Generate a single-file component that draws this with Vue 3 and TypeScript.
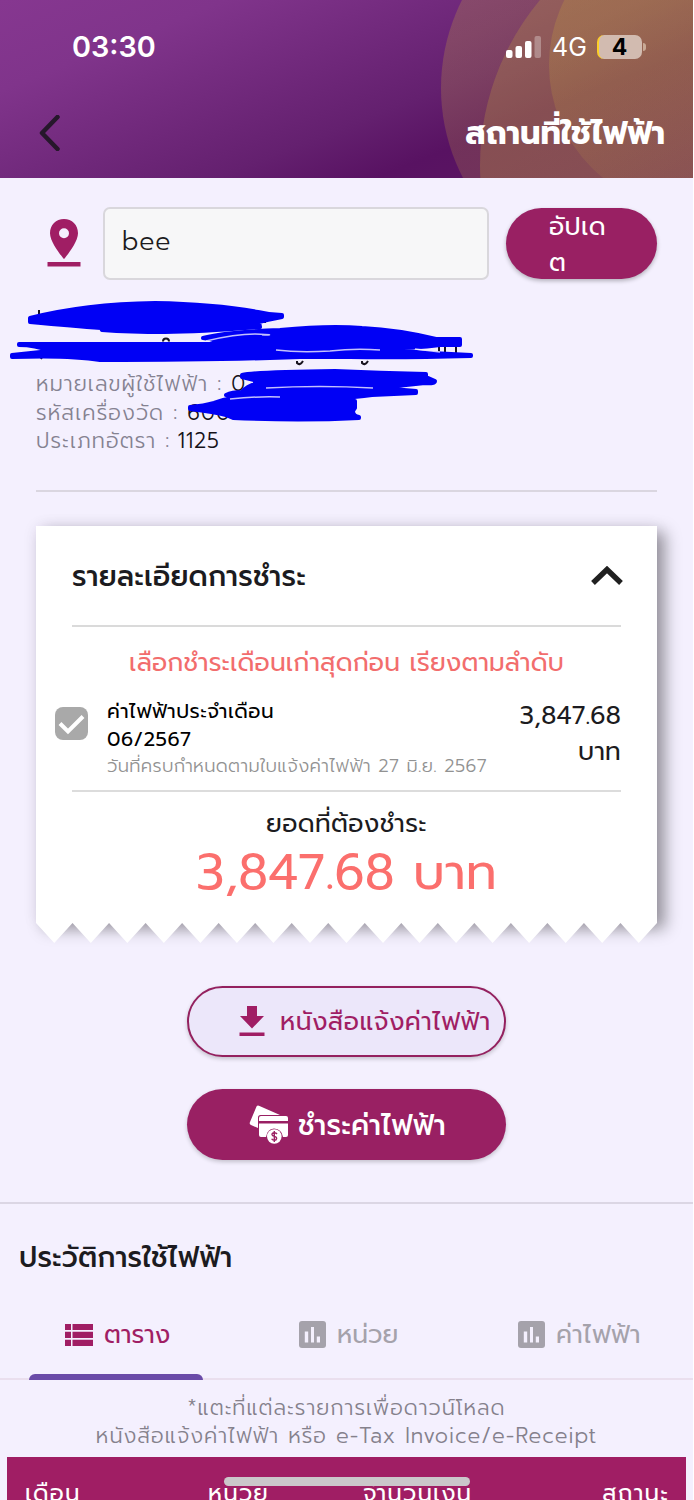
<script setup lang="ts">
interface Tab {
  id: string
  label: string
  icon: 'list' | 'chart'
}

const tabs: Tab[] = [
  { id: 'table', label: 'ตาราง', icon: 'list' },
  { id: 'unit', label: 'หน่วย', icon: 'chart' },
  { id: 'cost', label: 'ค่าไฟฟ้า', icon: 'chart' },
]
const columns: string[] = ['เดือน', 'หน่วย', 'จำนวนเงิน', 'สถานะ']
const teeth = 17
const pitch = 621 / teeth
const tearPath =
  'M0 0' +
  Array.from({ length: teeth }, (_, i) => ` L${((i + 0.5) * pitch).toFixed(2)} 20 L${((i + 1) * pitch).toFixed(2)} 0`).join('') +
  ' Z'
</script>

<template>
  <div class="page">
    <header class="hero">
      <svg class="hero-art" width="693" height="178" viewBox="0 0 693 178">
        <defs>
          <linearGradient id="ring" gradientUnits="userSpaceOnUse" x1="540" y1="0" x2="640" y2="200">
            <stop offset="0" stop-color="#c09a40" stop-opacity=".28" />
            <stop offset="1" stop-color="#c08a48" stop-opacity=".2" />
          </linearGradient>
          <linearGradient id="core" gradientUnits="userSpaceOnUse" x1="600" y1="20" x2="680" y2="178">
            <stop offset="0" stop-color="#c09a40" stop-opacity=".28" />
            <stop offset="1" stop-color="#c09a40" stop-opacity=".08" />
          </linearGradient>
        </defs>
        <circle cx="636" cy="88" r="195" fill="url(#ring)" />
        <circle cx="737" cy="165" r="257" fill="#c09a40" fill-opacity=".28" />
        <circle cx="694" cy="65" r="145" fill="url(#core)" />
      </svg>
      <div class="status">
        <span class="clock">03:30</span>
        <div class="indicators">
          <svg width="36" height="24" viewBox="0 0 36 24">
            <g fill="#fff">
              <rect x="0" y="15" width="6.5" height="8" rx="2" />
              <rect x="9.5" y="11" width="6.5" height="12" rx="2" />
              <rect x="19" y="6" width="6.5" height="17" rx="2" />
              <rect x="28.5" y="1" width="6.5" height="22" rx="2" opacity="0.3" />
            </g>
          </svg>
          <span class="network">4G</span>
          <span class="battery"><span class="level">4</span></span>
          <span class="nub"></span>
        </div>
      </div>
      <div class="titlebar">
        <svg width="24" height="36" viewBox="0 0 24 36">
          <path d="M19.5 2 L4 18 L19.5 34" fill="none" stroke="#26172b" stroke-width="4.5" stroke-linecap="round" stroke-linejoin="round" />
        </svg>
        <h1 class="title">สถานที่ใช้ไฟฟ้า</h1>
      </div>
    </header>

    <section class="place">
      <svg class="pin" width="34" height="49" viewBox="0 0 34 49">
        <path fill="#a01e64" fill-rule="evenodd" d="M17 0C9 0 3 6 3 14.2C3 24 17 40 17 40S31 24 31 14.2C31 6 25 0 17 0ZM17 9.2a5 5 0 1 1 0 10a5 5 0 0 1 0-10Z" />
        <rect x="0.5" y="43" width="33" height="4.5" fill="#a01e64" />
      </svg>
      <div class="field">bee</div>
      <button class="update">อัปเด<br />ต</button>
    </section>

    <section class="account">
      <div class="line hidden-name">&nbsp;</div>
      <div class="line hidden-name">&nbsp;</div>
      <div class="line"><span class="key">หมายเลขผู้ใช้ไฟฟ้า :</span><span class="val">0200</span></div>
      <div class="line"><span class="key">รหัสเครื่องวัด :</span><span class="val">600</span></div>
      <div class="line last"><span class="key">ประเภทอัตรา :</span><span class="val">1125</span></div>
      <svg class="scribble" width="480" height="170" viewBox="0 290 480 170">
        <g fill="none" stroke="#18131f" stroke-width="2">
          <path d="M39 310V314M265 319V323M163 341.5a3 3 0 0 1 6 0M44 352L41 359M292 350L294 354M301 349V354M297 361V363Q300 366 303 361M362 361V363Q365 366 368 361M439 347V353M445 346V353M456 346V353" />
        </g>
        <g fill="#0000f5" stroke="#0000f5" stroke-width="4" stroke-linejoin="round">
          <path d="M30 318Q85 304 155 303Q215 304 258 312Q270 315 282 315V317Q266 320 259 322L260 327Q200 332 165 332Q130 332 102 330L101 328Q75 326 30 322Z" />
          <path d="M19 344L210 344Q225 341 203 338Q225 332 280 330Q330 325 362 328Q400 330 436 339H460V345H440Q410 349 355 348Q315 349 275 348Q260 346 250 347Q275 352 310 352Q350 350 380 349Q420 353 471 355V356Q400 358 350 357L300 357Q220 360 100 360Q70 355 12 357V355L50 351Q35 345 19 345Z" />
          <path d="M242 375Q255 372 335 371Q380 373 426 374V377L435 381Q435 384 425 383Q395 386 380 388L416 391V393L372 395Q355 397 345 398L350 401H355V408L353 411Q353 416 359 417V418Q300 421 233 418L226 415Q215 412 190 409V407Q204 406 214 403Q225 399 238 397L226 395Q232 392 242 392Q247 386 256 384L254 380L242 377Z" />
        </g>
        <g fill="none" stroke="#f4f0fe" stroke-width="1.5" opacity=".8">
          <path d="M266 388Q320 385 373 388M206 341Q235 334 255 334Q280 335 262 335M230 399Q260 396 280 397M276 350Q300 353 330 351Q355 348 380 350M415 349L440 352" />
        </g>
      </svg>
    </section>
    <div class="rule"></div>

    <section class="bill">
      <div class="paper">
        <div class="bill-head">
          <h2>รายละเอียดการชำระ</h2>
          <svg width="32" height="20" viewBox="0 0 32 20">
            <path d="M2 17L16 3.5L30 17" fill="none" stroke="#202020" stroke-width="5.4" />
          </svg>
        </div>
        <p class="notice">เลือกชำระเดือนเก่าสุดก่อน เรียงตามลำดับ</p>
        <div class="item">
          <svg class="check" width="33" height="33" viewBox="0 0 33 33">
            <rect width="33" height="33" rx="8" fill="#a9a9a9" />
            <path d="M5 16.5L13 24.5L28 9.5" fill="none" stroke="#fff" stroke-width="4" />
          </svg>
          <div class="item-body">
            <div class="item-row">ค่าไฟฟ้าประจำเดือน</div>
            <div class="item-row">06/2567</div>
            <div class="item-due">วันที่ครบกำหนดตามใบแจ้งค่าไฟฟ้า 27 มิ.ย. 2567</div>
          </div>
          <div class="item-price"><span>3,847.68</span><span>บาท</span></div>
        </div>
        <div class="total-label">ยอดที่ต้องชำระ</div>
        <div class="total">3,847.68 บาท</div>
      </div>
      <svg class="tear" width="621" height="20" viewBox="0 0 621 20"><path :d="tearPath" fill="#fff" /></svg>
    </section>

    <section class="actions">
      <button class="pill outline">
        <svg width="26" height="30" viewBox="0 0 26 30">
          <path fill="#a01e64" d="M8 0H18V10H25L13 22.5L1 10H8ZM0.5 26.5H25.5V30H0.5Z" />
        </svg>
        <span>หนังสือแจ้งค่าไฟฟ้า</span>
      </button>
      <button class="pill solid">
        <svg width="40" height="40" viewBox="0 0 40 40">
          <path fill="#fff" d="M7.5 1.5Q8.5 0 10.5 1L31 10H11.5Q9 10 9 12.5V23L2 20Q0 19 1 17Z" />
          <path fill="#fff" d="M12 11H37Q39 11 39 13V16H10V13Q10 11 12 11ZM10 18.5H39V30Q39 32 37 32H34Q33 24 25 23.5Q18 24 17 32H12Q10 32 10 30Z" />
          <circle cx="25.3" cy="31.5" r="7.3" fill="#fff" />
          <path d="M28 29Q27 27.5 25.2 27.7Q22.8 28 23 29.7Q23.3 31 25.3 31.4Q27.8 32 27.6 33.6Q27.3 35.3 25.2 35.2Q23.2 35 22.7 33.7M25.3 26V37" fill="none" stroke="#9b2063" stroke-width="1.4" />
        </svg>
        <span>ชำระค่าไฟฟ้า</span>
      </button>
    </section>

    <section class="history">
      <h2 class="history-title">ประวัติการใช้ไฟฟ้า</h2>
      <nav class="tabs">
        <div v-for="tab in tabs" :key="tab.id" class="tab" :class="tab.id">
          <svg v-if="tab.icon === 'list'" width="28" height="22" viewBox="0 0 28 22">
            <path fill="#a01e64" d="M0 0H6V6H0ZM7.5 0H28V6H7.5ZM0 7.7H6V14H0ZM7.5 7.7H28V14H7.5ZM0 15.7H6V22H0ZM7.5 15.7H28V22H7.5Z" />
          </svg>
          <svg v-else width="27" height="27" viewBox="0 0 27 27">
            <rect width="27" height="27" rx="3" fill="#a5a2ab" />
            <path fill="#f4f0fe" d="M5.8 10.5H9.2V21.5H5.8ZM12 6H15V21.5H12ZM17.8 15.5H21V21.5H17.8Z" />
          </svg>
          <span class="tab-label">{{ tab.label }}</span>
        </div>
      </nav>
      <div class="track"><div class="ink"></div></div>
      <p class="hint h1">*แตะที่แต่ละรายการเพื่อดาวน์โหลด</p>
      <p class="hint">หนังสือแจ้งค่าไฟฟ้า หรือ e-Tax Invoice/e-Receipt</p>
      <div class="thead">
        <span v-for="label in columns" :key="label" class="th">{{ label }}</span>
      </div>
    </section>
    <div class="home-bar"></div>
  </div>
</template>

<style>
body { margin: 0; background: #fff; }
</style>
<style scoped>
* { box-sizing: border-box; }
h1, h2, p { margin: 0; font-weight: inherit; }
button { border: 0; padding: 0; font: inherit; }
svg { display: block; flex: none; }
.page { position: relative; width: 693px; height: 1500px; overflow: hidden; background: #f4f0fe; color: #1c1b20; font-family: Prompt, Kanit, "Noto Sans Thai", "Noto Sans", "Noto Sans CJK SC", sans-serif; white-space: nowrap; }
.hero { position: relative; height: 178px; background: linear-gradient(158deg, #863790 0%, #80348b 20%, #64206f 58%, #581262 72%, #5e1a62 100%); color: #fff; }
.hero-art { position: absolute; inset: 0; }
.status { position: relative; display: flex; justify-content: space-between; align-items: center; height: 94px; padding: 0 47px 0 72px; }
.clock { font: 600 28.8px/30px Inter, sans-serif; padding-bottom: 1px; }
.indicators { display: flex; align-items: center; }
.network { font: 400 25px/30px Inter, sans-serif; margin-left: 10px; width: 45px; }
.battery { width: 45px; height: 24px; border-radius: 7px; background: #d2bbb0; border-left: 2px solid #fccf27; color: #000; display: flex; align-items: center; justify-content: center; font: 700 23px/24px Inter, sans-serif; }
.level { margin-right: 2px; }
.nub { width: 3px; height: 8px; margin-left: 1px; border-radius: 0 3px 3px 0; background: #c9aa96; }
.titlebar { position: relative; display: flex; align-items: center; justify-content: space-between; height: 78px; padding: 0 28px 0 38px; }
.title { font-weight: 700; font-size: 32px; line-height: 48px; padding-top: 2px; }
.place { display: flex; align-items: center; height: 72px; margin: 29px 36px 0 47px; }
.pin { margin-top: 1px; }
.field { width: 386px; height: 73px; margin-left: 22px; border: 2px solid #d9d7dc; border-radius: 7px; background: #f7f7f8; padding-left: 17px; font-size: 25px; font-weight: 300; letter-spacing: .8px; line-height: 67px; }
.update { width: 151px; height: 71px; margin-left: 17px; border-radius: 36px; background: #992063; color: #fff; font-size: 25px; letter-spacing: .3px; line-height: 36px; text-align: left; padding: 1px 0 0 43px; box-shadow: 0 2px 4px #0004; }
.account { position: relative; height: 211px; padding: 23px 36px 0; }
.line { height: 28.5px; line-height: 28.5px; font-size: 21px; font-weight: 300; letter-spacing: 1.08px; display: flex; }
.line.hidden-name { height: 34px; }
.key { color: #858291; }
.val { margin-left: 9px; color: #151219; }
.last .val { margin-left: 7px; letter-spacing: .9px; }
.scribble { position: absolute; left: 0; top: 11px; }
.rule { height: 2px; margin: 0 36px; background: #dad6e0; }
.bill { position: relative; height: 418px; margin: 34px 36px 0; }
.paper { height: 397px; background: #fff; padding: 0 36px; box-shadow: 8px 6px 15px rgba(0,0,0,.38), 0 0 16px rgba(60,40,90,.06); }
.tear { position: relative; margin-top: -0.5px; }
.bill-head { display: flex; align-items: center; justify-content: space-between; height: 101px; border-bottom: 2px solid #dadada; }
.bill-head svg { margin-right: -2px; }
.bill-head h2 { font-size: 28px; font-weight: 500; letter-spacing: .2px; line-height: 40px; padding-top: 2px; }
.notice { text-align: center; color: #f26d6d; font-size: 25px; letter-spacing: .13px; line-height: 40px; height: 68px; padding-top: 16px; }
.item { display: flex; position: relative; height: 97px; border-bottom: 2px solid #dcdcdc; }
.check { margin: 12px 0 0 -17px; }
.item-body { margin-left: 19px; width: 391px; padding-top: 2px; }
.item-row { font-size: 20px; letter-spacing: .46px; line-height: 28px; height: 28px; color: #000; }
.item-due { font-size: 18px; font-weight: 300; letter-spacing: .36px; line-height: 26px; color: #929292; }
.item-price { margin-left: auto; text-align: right; font-size: 25px; letter-spacing: .2px; line-height: 36px; display: flex; flex-direction: column; align-items: flex-end; padding-top: 3px; }
.total-label { text-align: center; font-size: 25px; letter-spacing: .35px; line-height: 36px; margin-top: 14px; }
.total { text-align: center; color: #fb6f6d; font-size: 49.5px; letter-spacing: .1px; line-height: 62px; }
.actions { display: flex; flex-direction: column; align-items: center; gap: 32px; height: 260px; padding-top: 42px; border-bottom: 2px solid #dbd6e4; }
.pill { display: flex; align-items: center; width: 319px; height: 71px; border-radius: 36px; box-shadow: 0 2px 4px #0003; }
.outline { border: 2px solid #94215f; background: #ece7fa; color: #a01e64; padding: 0 0 1px 50px; font-size: 25px; letter-spacing: .45px; }
.outline span { margin: 2px 0 0 15px; }
.solid { background: #992063; color: #fff; font-weight: 500; font-size: 28px; letter-spacing: .2px; padding-left: 62px; }
.solid span { margin: 1px 0 0 9px; }
.history-title { font-size: 28px; font-weight: 500; letter-spacing: .15px; line-height: 40px; padding: 34px 0 0 19px; height: 87px; }
.tabs { display: flex; height: 87px; }
.tab { display: flex; align-items: center; width: 231px; font-size: 25px; color: #a5a2ab; }
.tab-label { margin: 1px 0 0 11px; }
.table { color: #a01e64; padding-left: 65px; }
.unit { padding-left: 68px; }
.cost { padding-left: 56px; letter-spacing: .3px; }
.track { height: 2px; background: #eadfee; display: flex; align-items: flex-end; }
.ink { width: 174px; height: 6px; margin-left: 29px; border-radius: 6px 6px 0 0; background: #6a4ba8; }
.hint { text-align: center; color: #85818c; font-size: 21px; font-weight: 300; letter-spacing: 1px; line-height: 28px; }
.h1 { margin-top: 14px; }
.thead { margin: 7px 7px 0; height: 60px; background: #a01e64; color: #fff; font-size: 23px; letter-spacing: 1.2px; line-height: 36px; padding: 19px 17px 0 18px; display: grid; grid-template-columns: 183px 155px 1fr auto; }
.home-bar { position: absolute; left: 224px; top: 1477px; width: 246px; height: 9px; border-radius: 5px; background: #cbc7ca; }
</style>
